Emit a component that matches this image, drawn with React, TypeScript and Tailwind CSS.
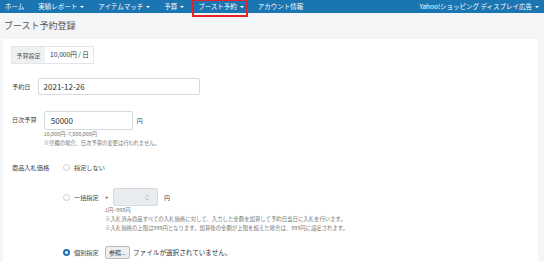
import React from 'react';

const font = { fontFamily: '"Noto Sans CJK JP", "Noto Sans", sans-serif' };

const Caret = () => (
  <span className="ml-[3px] inline-block border-x-[2px] border-t-[2px] border-x-transparent border-t-white align-middle" />
);

const navItems = [
  { label: 'ホーム', caret: false },
  { label: '実績レポート', caret: true },
  { label: 'アイテムマッチ', caret: true },
  { label: '予算', caret: true },
  { label: 'ブースト予約', caret: true, active: true },
  { label: 'アカウント情報', caret: false },
];

const Radio: React.FC<{ checked?: boolean }> = ({ checked }) =>
  checked ? (
    <span className="flex h-[7px] w-[7px] items-center justify-center rounded-full bg-[#1b6fb0]">
      <span className="h-[3px] w-[3px] rounded-full bg-white" />
    </span>
  ) : (
    <span className="h-[7px] w-[7px] rounded-full border border-[#c9ced4] bg-white" />
  );

const App: React.FC = () => {
  return (
    <div className="h-[262px] w-[544px] overflow-hidden bg-[#f4f5f7] text-[#444]" style={font}>
      {/* ナビゲーション */}
      <div className="flex h-[13px] items-center justify-between bg-[#1b75b1] pl-[5px] pr-[5px] text-[6.5px] leading-none text-white">
        <div className="flex items-center gap-[14px]">
          {navItems.map((item) => (
            <div key={item.label} className="relative flex items-center">
              {item.active && (
                <span className="absolute -left-[6px] -right-[4px] -top-[4px] h-[18px] border-2 border-[#e8202a]" />
              )}
              <span>{item.label}</span>
              {item.caret && <Caret />}
            </div>
          ))}
        </div>
        <div className="flex items-center">
          <span>Yahoo!ショッピング ディスプレイ広告</span>
          <Caret />
        </div>
      </div>

      {/* タイトル */}
      <div className="flex h-[25px] items-center px-[4px] pt-[1px] text-[9px] text-[#555]">ブースト予約登録</div>

      {/* 本体 */}
      <div className="ml-[3px] mr-[6px] mt-[1px] h-[240px] bg-white pl-[8px] pt-[7px] text-[6.2px]">
        <div className="flex h-[18px] w-[83px] border border-[#e3e5e8]">
          <div className="flex w-[33px] items-center justify-center bg-[#eef0f2] text-[6px] text-[#555]">予算設定</div>
          <div className="flex flex-1 items-center pl-[5px] text-[6.6px] text-[#333]">10,000円 / 日</div>
        </div>

        <div className="mt-[14px] flex items-center gap-[7px]">
          <span className="pl-[1px]">予約日</span>
          <div className="flex h-[17px] w-[162px] items-center rounded-[2px] border border-[#d6d9dd] pl-[5px] text-[8px] text-[#333]">
            2021-12-26
          </div>
        </div>

        <div className="mt-[16px] flex gap-[7px]">
          <span className="pl-[1px] pt-[4px]">日次予算</span>
          <div>
            <div className="flex items-center">
              <div className="flex h-[19px] w-[89px] items-center rounded-[2px] border border-[#d6d9dd] pl-[6px] text-[8px] text-[#333]">
                50000
              </div>
              <span className="ml-[4px] text-[6px]">円</span>
            </div>
            <div className="text-[5.3px] leading-[9px] text-[#777]">
              <div>10,000円~7,000,000円</div>
              <div>※空欄の場合、日次予算の変更は行われません。</div>
            </div>
          </div>
        </div>

        <div className="mt-[15px] flex items-center">
          <span className="w-[52px] pl-[1px]">商品入札価格</span>
          <Radio />
          <span className="ml-[4px]">指定しない</span>
        </div>

        <div className="ml-[52px] mt-[16px] flex items-start">
          <div className="flex h-[18px] items-center">
            <Radio />
            <span className="ml-[4px] w-[31px]">一括指定</span>
          </div>
          <div>
            <div className="flex items-center">
              <span className="w-[8px]">+</span>
              <div className="flex h-[18px] w-[45px] items-center justify-end rounded-[2px] border border-[#d6d9dd] bg-[#e9ecef] pr-[8px]">
                <svg width="4" height="7" viewBox="0 0 4 7" fill="none" stroke="#9aa0a6" strokeWidth="0.7">
                  <path d="M0.6 2.6 L2 1.2 L3.4 2.6" />
                  <path d="M0.6 4.4 L2 5.8 L3.4 4.4" />
                </svg>
              </div>
              <span className="ml-[6px] text-[6px]">円</span>
            </div>
            <div className="text-[5.4px] leading-[9px] text-[#777]">
              <div>1円~998円</div>
              <div>※入札済み商品すべての入札価格に対して、入力した金額を加算して予約日当日に入札を行います。</div>
              <div>※入札価格の上限は999円となります。加算後の金額が上限を超えた場合は、999円に設定されます。</div>
            </div>
          </div>
        </div>

        <div className="ml-[52px] mt-[13px] flex items-center">
          <Radio checked />
          <span className="ml-[4px] w-[31px]">個別指定</span>
          <div className="flex h-[13px] items-center rounded-[2px] border border-[#b9bdc2] bg-[#eceef0] px-[3px] text-[6px] text-[#333]">
            参照...
          </div>
          <span className="ml-[3px] text-[6.6px] text-[#333]">ファイルが選択されていません。</span>
        </div>
      </div>
    </div>
  );
};

export default App;
